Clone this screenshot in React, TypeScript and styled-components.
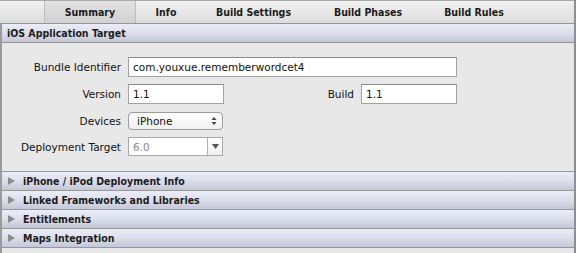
import React from "react";
import styled, { createGlobalStyle } from "styled-components";

const tabs = [
  { label: "Summary", width: 92 },
  { label: "Info", width: 60 },
  { label: "Build Settings", width: 115 },
  { label: "Build Phases", width: 114 },
  { label: "Build Rules", width: 98 },
];

const sections = [
  "iPhone / iPod Deployment Info",
  "Linked Frameworks and Libraries",
  "Entitlements",
  "Maps Integration",
];

const App: React.FC = () => {
  return (
    <Root>
      <GlobalStyle />
      <TabBar>
        {tabs.map((tab, i) => (
          <Tab key={tab.label} $width={tab.width} $selected={i === 0}>
            {tab.label}
          </Tab>
        ))}
      </TabBar>
      <Panel>
        <SectionHeader>iOS Application Target</SectionHeader>
        <Form>
          <Row>
            <Label>Bundle Identifier</Label>
            <TextField $grow>com.youxue.rememberwordcet4</TextField>
          </Row>
          <Row>
            <Label>Version</Label>
            <TextField>1.1</TextField>
            <Spacer />
            <InlineLabel>Build</InlineLabel>
            <TextField>1.1</TextField>
          </Row>
          <Row $top={8}>
            <Label>Devices</Label>
            <Popup>
              iPhone
              <Stepper viewBox="0 0 6 10" width="6" height="10">
                <path d="M3 1 L5.5 4 H0.5 Z M3 9 L5.5 6 H0.5 Z" fill="#444" />
              </Stepper>
            </Popup>
          </Row>
          <Row $top={7}>
            <Label>Deployment Target</Label>
            <Combo>
              <ComboText>6.0</ComboText>
              <ComboButton>
                <svg viewBox="0 0 7 5" width="7" height="5">
                  <path d="M0 0 H7 L3.5 5 Z" fill="#555" />
                </svg>
              </ComboButton>
            </Combo>
          </Row>
        </Form>
        <Collapsed>
          {sections.map((title) => (
            <CollapsedHeader key={title}>
              <Disclosure viewBox="0 0 7 8" width="7" height="8">
                <path d="M0 0 L7 4 L0 8 Z" fill="#8c8c8c" />
              </Disclosure>
              {title}
            </CollapsedHeader>
          ))}
        </Collapsed>
      </Panel>
    </Root>
  );
};

export default App;

const GlobalStyle = createGlobalStyle`
  html, body {
    margin: 0;
    padding: 0;
    background: #e8e8e8;
    overflow: hidden;
  }
  body {
    font-family: "DejaVu Sans", "Liberation Sans", sans-serif;
    font-size: 10.5px;
    color: #111;
  }
`;

const boldText = `
  font-weight: bold;
  font-stretch: condensed;
  color: #1c1c1c;
`;

const Root = styled.div`
  display: flex;
  flex-direction: column;
  width: 576px;
  height: 253px;
  box-sizing: border-box;
  border-right: 2px solid #8f8f8f;
  background: #e8e8e8;
`;

const TabBar = styled.div`
  display: flex;
  height: 22px;
  padding-left: 44px;
  border-top: 1px solid #a9a9a9;
  border-bottom: 1px solid #959595;
  background: linear-gradient(#f1f1f1, #dddddd);
`;

const Tab = styled.div<{ $width: number; $selected?: boolean }>`
  display: flex;
  align-items: center;
  justify-content: center;
  width: ${(p) => p.$width}px;
  box-sizing: border-box;
  ${boldText}
  ${(p) =>
    p.$selected &&
    `
    background: linear-gradient(#e2e2e2, #d1d1d1);
    border-left: 1px solid #bdbdbd;
    border-right: 1px solid #bdbdbd;
  `}
`;

const Panel = styled.div`
  display: flex;
  flex-direction: column;
  flex: 1;
  border-left: 2px solid #9b9b9b;
`;

const headerBg = `
  background: linear-gradient(#ebedf8, #dcdeeb 50%, #c4c7d6);
  border-bottom: 1px solid #979797;
`;

const SectionHeader = styled.div`
  display: flex;
  align-items: center;
  height: 18px;
  padding-left: 5px;
  ${boldText}
  ${headerBg}
`;

const Form = styled.div`
  display: flex;
  flex-direction: column;
  width: 455px;
  height: 128px;
  box-sizing: border-box;
  padding-top: 14px;
`;

const Row = styled.div<{ $top?: number }>`
  display: flex;
  align-items: center;
  margin-top: ${(p) => p.$top ?? 7}px;

  &:first-child {
    margin-top: 0;
  }
`;

const Label = styled.div`
  width: 119px;
  margin-right: 7px;
  text-align: right;
`;

const InlineLabel = styled.div`
  margin-right: 7px;
`;

const Spacer = styled.div`
  flex: 1;
`;

const TextField = styled.div<{ $grow?: boolean }>`
  display: flex;
  align-items: center;
  ${(p) => (p.$grow ? "flex: 1;" : "width: 96px;")}
  height: 20px;
  box-sizing: border-box;
  padding-left: 4px;
  background: #fff;
  border: 1px solid #a3a3a3;
  border-top-color: #8c8c8c;
`;

const Popup = styled.div`
  display: flex;
  align-items: center;
  justify-content: space-between;
  width: 95px;
  height: 18px;
  box-sizing: border-box;
  padding: 0 5px 0 8px;
  background: linear-gradient(#ffffff, #f1f1f1);
  border: 1px solid #9c9c9c;
  border-radius: 4px;
`;

const Stepper = styled.svg`
  display: block;
`;

const Combo = styled.div`
  display: flex;
  width: 95px;
  height: 19px;
  box-sizing: border-box;
  background: #fff;
  border: 1px solid #a9a9a9;
`;

const ComboText = styled.div`
  display: flex;
  align-items: center;
  flex: 1;
  padding-left: 4px;
  color: #8a8a8a;
`;

const ComboButton = styled.div`
  display: flex;
  align-items: center;
  justify-content: center;
  width: 14px;
  border-left: 1px solid #b3b3b3;
  background: linear-gradient(#ffffff, #f0f0f0);
`;

const Collapsed = styled.div`
  border-top: 1px solid #979797;
`;

const CollapsedHeader = styled.div`
  display: flex;
  align-items: center;
  height: 18px;
  padding-left: 6px;
  ${boldText}
  ${headerBg}
`;

const Disclosure = styled.svg`
  display: block;
  margin-right: 8px;
`;
